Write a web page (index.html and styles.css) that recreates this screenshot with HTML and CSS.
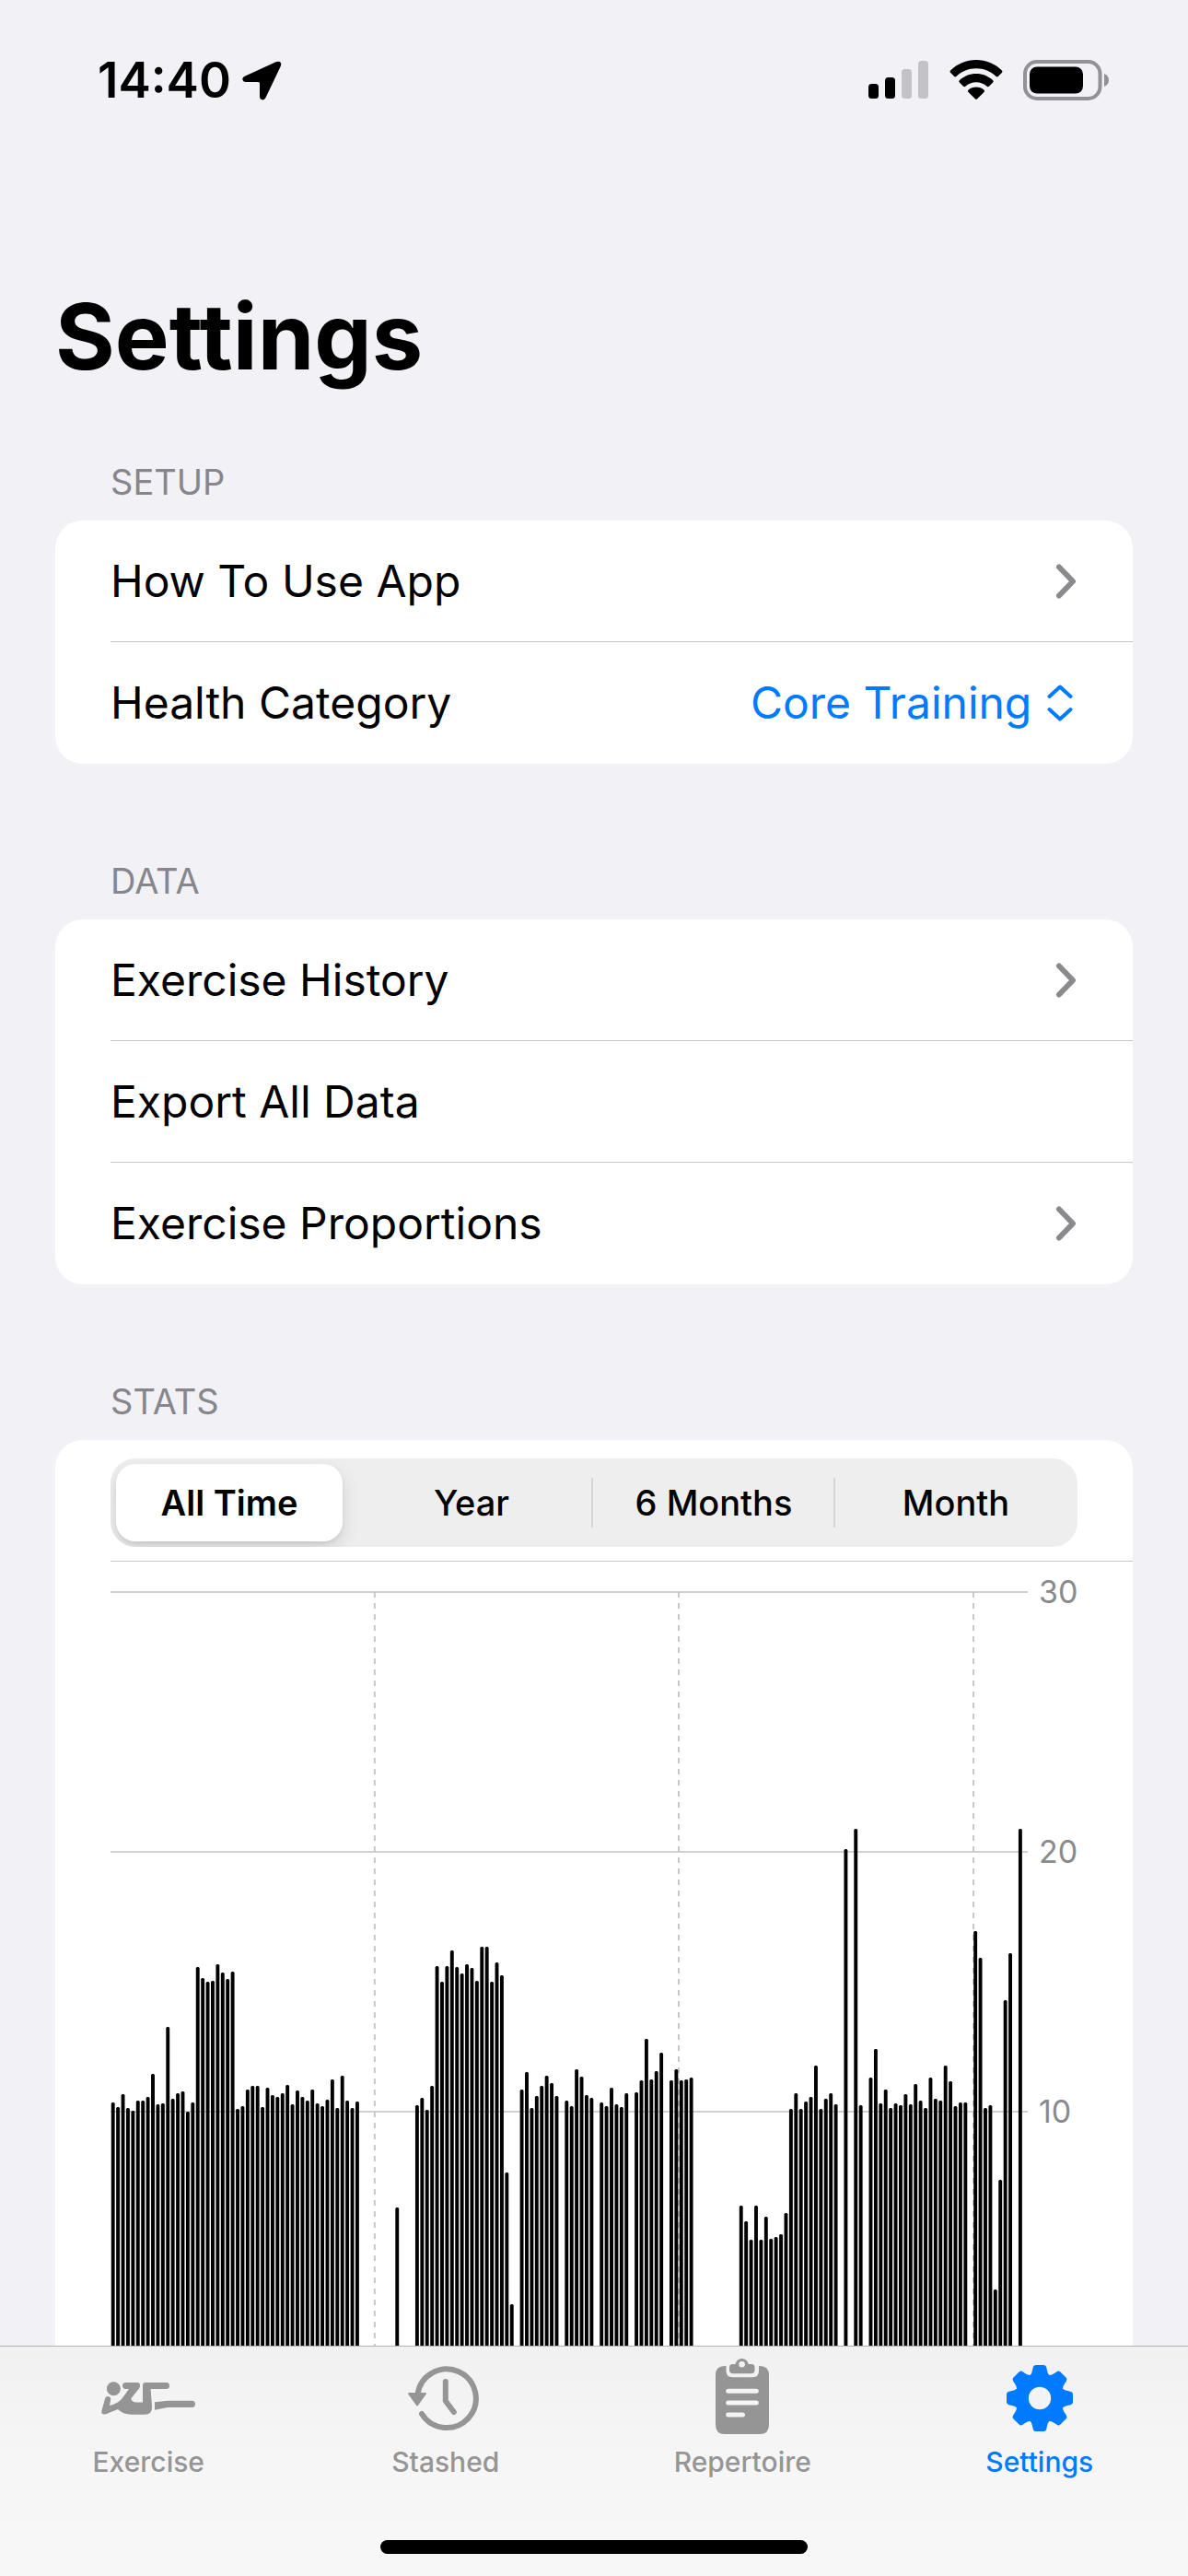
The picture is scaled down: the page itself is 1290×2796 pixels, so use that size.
FILE: index.html
```html
<!DOCTYPE html>
<html lang="en">
<head>
  <meta charset="utf-8">
  <meta name="viewport" content="width=device-width, initial-scale=1">
  <title>Settings</title>
  <link rel="stylesheet" href="styles.css">
</head>
<body>
  <header class="status">
    <div class="status-time">
      <time>14:40</time>
      <svg width="44" height="44" viewBox="0 0 44 44" aria-hidden="true"><path d="M42.300 2.500Q44 4 42.700 7L26.500 41Q25 43.800 22.700 43.300Q20 42.800 20 39.800V25.500Q20 24 18.500 24H5Q2 24 1.400 21.500Q1 19 3.800 17.700L37.500 2.200Q41 1 42.300 2.500Z"/></svg>
    </div>
    <div class="status-icons">
      <svg width="66" height="44" viewBox="0 0 66 44" aria-hidden="true">
        <rect x="0" y="26" width="11" height="16" rx="3.500"/>
        <rect x="18" y="19" width="11" height="23" rx="3.500"/>
        <rect class="dim" x="36" y="10" width="11" height="32" rx="3.500"/>
        <rect class="dim" x="54" y="1" width="11" height="41" rx="3.500"/>
      </svg>
      <svg width="58" height="44" viewBox="0 0 58 44" aria-hidden="true">
        <path d="M29 0C39.500 0 49.500 4.200 57 11.500Q58 12.600 57 13.700L52.800 18Q51.800 18.900 50.700 18C44.800 12.300 37.200 9.200 29 9.200S13.200 12.300 7.300 18Q6.200 18.900 5.200 18L1 13.700Q0 12.600 1 11.500C8.500 4.200 18.500 0 29 0Z"/>
        <path d="M29 15C35.900 15 42.300 17.600 47.200 22.200Q48.300 23.300 47.200 24.400L42.900 28.700Q41.800 29.600 40.700 28.700C37.500 25.800 33.400 24.200 29 24.200S20.500 25.800 17.300 28.700Q16.200 29.600 15.100 28.700L10.800 24.400Q9.700 23.300 10.800 22.200C15.700 17.600 22.100 15 29 15Z"/>
        <path d="M29 29.500C32.300 29.500 35.300 30.700 37.600 32.700Q38.700 33.900 37.500 35L30.200 42.200Q29 43.200 27.800 42.200L20.500 35Q19.300 33.900 20.400 32.700C22.700 30.700 25.700 29.500 29 29.500Z"/>
      </svg>
      <svg width="94" height="44" viewBox="0 0 94 44" aria-hidden="true">
        <rect class="shell" x="2" y="2" width="81.500" height="40" rx="13"/>
        <rect x="7" y="7.500" width="58" height="29" rx="8"/>
        <path class="cap" d="M88 15Q93 17 93 22T88 29Z"/>
      </svg>
    </div>
  </header>

  <main class="content">
    <h1 class="title">Settings</h1>

    <section class="group">
      <h2 class="group-title">SETUP</h2>
      <div class="card">
        <a class="row" href="#how-to"><span class="row-body">How To Use App<svg class="chevron" width="24" height="40" viewBox="0 0 24 40" aria-hidden="true"><path d="M4 4.500L19 20L4 35.500"/></svg></span></a>
        <div class="row">
          <div class="row-body">
            <label for="category">Health Category</label>
            <span class="picker">
              <select id="category">
                <option selected>Core Training</option>
              </select>
              <svg width="28" height="42" viewBox="0 0 28 42" aria-hidden="true"><path d="M2.500 14L14 3.500L25.500 14M2.500 28L14 38.500L25.500 28"/></svg>
            </span>
          </div>
        </div>
      </div>
    </section>

    <section class="group">
      <h2 class="group-title">DATA</h2>
      <div class="card">
        <a class="row" href="#history"><span class="row-body">Exercise History<svg class="chevron" width="24" height="40" viewBox="0 0 24 40" aria-hidden="true"><path d="M4 4.500L19 20L4 35.500"/></svg></span></a>
        <button class="row" type="button"><span class="row-body">Export All Data</span></button>
        <a class="row" href="#proportions"><span class="row-body">Exercise Proportions<svg class="chevron" width="24" height="40" viewBox="0 0 24 40" aria-hidden="true"><path d="M4 4.500L19 20L4 35.500"/></svg></span></a>
      </div>
    </section>

    <section class="group">
      <h2 class="group-title">STATS</h2>
      <div class="card">
        <div class="range-row">
          <div class="segments" role="radiogroup" aria-label="Range">
            <label class="segment"><input type="radio" name="range" checked><span>All Time</span></label>
            <label class="segment"><input type="radio" name="range"><span>Year</span></label>
            <label class="segment"><input type="radio" name="range"><span>6 Months</span></label>
            <label class="segment"><input type="radio" name="range"><span>Month</span></label>
          </div>
        </div>
        <div class="chart">
          <svg class="plot" id="plot" role="img" aria-label="Exercise over time">
            <g class="grid-h">
              <line x1="0" x2="100%" y1="0" y2="0"/>
              <line x1="0" x2="100%" y1="33.333%" y2="33.333%"/>
              <line x1="0" x2="100%" y1="66.667%" y2="66.667%"/>
              <line x1="0" x2="100%" y1="100%" y2="100%"/>
            </g>
            <g class="grid-v">
              <line x1="28.800%" x2="28.800%" y1="0" y2="100%"/>
              <line x1="61.950%" x2="61.950%" y1="0" y2="100%"/>
              <line x1="94.080%" x2="94.080%" y1="0" y2="100%"/>
            </g>
          </svg>
          <div class="axis"><span>30</span><span>20</span><span>10</span></div>
        </div>
      </div>
    </section>
  </main>

  <nav class="tabs">
    <a class="tab" href="#exercise">
      <svg width="102" height="88" viewBox="0 -26 102 88" aria-hidden="true">
        <circle cx="13.400" cy="7.700" r="7.500"/>
        <path d="M4 18.500Q5 15.500 8 16.200Q10.600 17 10.200 19.500L9 26C15 24.500 20 22 23.500 17L30 8H26.500Q23 8 23 4.600T26.500 1H39Q42 1 42 4Q42 6 41 7.500L32.200 18.500Q33.500 22.500 38 22.500H45V4Q45 1 48 1H70.500Q74 1 74 4.600T70.500 8H53.600L55 27Q55.500 35.700 47 35.700H33Q23 35.500 18 30L5 35.200Q0 36.600 .3 32Z"/>
        <path d="M58 22.300L72 20.700H98.500Q102 20.700 102 24.300T98.500 28H72L58 30.700Z"/>
      </svg>
      <span>Exercise</span>
    </a>
    <a class="tab" href="#stashed">
      <svg class="history" width="84" height="88" viewBox="0 -7 84 88" aria-hidden="true">
        <path class="line" d="M11.500 33A31.800 31.800 0 1 1 16 54"/>
        <path class="line" d="M41.800 19V40L50.800 52"/>
        <path class="head" d="M2 32H20L11 44.500Z"/>
      </svg>
      <span>Stashed</span>
    </a>
    <a class="tab" href="#repertoire">
      <svg width="60" height="88" viewBox="0 0 60 88" aria-hidden="true">
        <path d="M12.500 9V14.500Q12.500 21.300 19.500 21.300H41Q48 21.300 48 14.500V9H49Q59 9 59 19V73Q59 83 49 83H11Q1 83 1 73V19Q1 9 11 9Z"/>
        <path fill-rule="evenodd" d="M22.500 7A7.200 7.200 0 0 1 36.700 7H40Q43.500 7 43.500 10.500V13.500Q43.500 17.300 39.500 17.300H20Q16 17.300 16 13.500V10.500Q16 7 19.500 7ZM29.600 4A3.300 3.300 0 1 0 29.600 10.600A3.300 3.300 0 1 0 29.600 4Z"/>
        <path class="rules" d="M14.700 36.300H45.300M14.700 49H45.300M14.700 62H30.500"/>
      </svg>
      <span>Repertoire</span>
    </a>
    <a class="tab tab-current" href="#settings" aria-current="page">
      <svg width="72" height="88" viewBox="-36 -44 72 88" aria-hidden="true">
        <defs><path id="tooth" d="M-11.500 -23L-10 -25.500Q-8.500 -27 -8 -30L-7.300 -33.500Q-6.800 -36 -4.300 -36H4.300Q6.800 -36 7.300 -33.500L8 -30Q8.500 -27 10 -25.500L11.500 -23Z"/></defs>
        <path fill-rule="evenodd" d="M0 -26A26 26 0 1 0 0 26A26 26 0 1 0 0 -26ZM0 -12.200A12.200 12.200 0 1 1 0 12.200A12.200 12.200 0 1 1 0 -12.200Z"/>
        <use href="#tooth"/><use href="#tooth" transform="rotate(45)"/><use href="#tooth" transform="rotate(90)"/><use href="#tooth" transform="rotate(135)"/><use href="#tooth" transform="rotate(180)"/><use href="#tooth" transform="rotate(225)"/><use href="#tooth" transform="rotate(270)"/><use href="#tooth" transform="rotate(315)"/>
      </svg>
      <span>Settings</span>
    </a>
    <div class="home-bar"></div>
  </nav>
  <script src="chart.js"></script>
</body>
</html>
```
FILE: styles.css
```css
* { box-sizing: border-box; }

body {
  margin: 0;
  height: 100vh;
  display: flex;
  flex-direction: column;
  background: #f2f1f6;
  color: #000;
  font-family: Inter, "Liberation Sans", sans-serif;
  font-size: 48px;
}

a, button { color: inherit; font: inherit; text-decoration: none; }
svg { display: block; flex: none; }

/* Status bar */
.status {
  flex: none;
  display: flex;
  justify-content: space-between;
  padding: 65px 85px 0 106px;
  height: 177px;
}
.status-time, .status-icons { display: flex; height: 44px; align-items: center; }
.status-time { gap: 11px; font-size: 53px; font-weight: 600; }
.status-icons { gap: 22px; }
.dim { fill: #c3c2c7; }
.shell { fill: none; stroke: #929195; stroke-width: 4; }
.cap { fill: #929195; }

/* Page */
.content {
  flex: 1;
  min-height: 0;
  overflow-y: auto;
  scrollbar-width: none;
  padding: 128px 60px 0;
}
.title { margin: 0 0 56px; font-size: 99px; line-height: 120px; font-weight: 700; }
.group { margin-bottom: 86px; }
.group-title {
  margin: 0;
  padding: 17px 60px 18px;
  font-size: 38px;
  line-height: 48px;
  font-weight: 400;
  color: #86868b;
}
.group:first-of-type .group-title { padding-top: 18px; }
.card { background: #fff; border-radius: 30px; overflow: hidden; }

.row {
  display: block;
  width: 100%;
  padding: 0 0 0 60px;
  border: 0;
  background: none;
  text-align: left;
}
.row-body {
  display: flex;
  align-items: center;
  justify-content: space-between;
  height: 132px;
  padding-right: 60px;
  border-bottom: 1px solid #c6c6c8;
}
.row:last-child .row-body { border-bottom-color: transparent; }
.chevron { fill: none; stroke: #8a8a8e; stroke-width: 6; stroke-linecap: round; stroke-linejoin: round; }
.picker { display: flex; align-items: center; gap: 16px; padding-right: 5px; color: #007aff; }
.picker select {
  appearance: none;
  margin: 0;
  padding: 0;
  border: 0;
  background: none;
  color: inherit;
  font: inherit;
}
.picker svg { fill: none; stroke: currentColor; stroke-width: 4; stroke-linecap: round; stroke-linejoin: round; }

/* Range selector */
.range-row { margin-left: 60px; padding: 20px 60px 15px 0; border-bottom: 1px solid #c6c6c8; }
.segments {
  display: grid;
  grid-template-columns: repeat(4, 1fr);
  gap: 17px;
  padding: 6px 9px 6px 6px;
  border-radius: 27px;
  background: #eee;
  overflow: hidden;
}
.segment { position: relative; font-size: 38px; font-weight: 500; }
.segment input { position: absolute; opacity: 0; margin: 0; }
.segment span { display: block; line-height: 84px; text-align: center; border-radius: 21px; }
.segment input:checked + span { background: #fff; font-weight: 600; box-shadow: 0 8px 20px #0000001f, 0 3px 4px #0000000f; }
.segment:nth-child(n+3)::before {
  content: "";
  position: absolute;
  left: -10px;
  top: 15px;
  width: 2px;
  height: 54px;
  background: #d6d6d8;
}

/* Chart */
.chart { display: flex; gap: 12px; padding: 33px 60px 60px; }
.plot { flex: 1; min-width: 0; height: 846px; overflow: visible; }
.grid-h { stroke: #d1d1d3; stroke-width: 2; }
.grid-v { stroke: #c8c8ca; stroke-width: 2; stroke-dasharray: 6 6; }
.axis {
  width: 42px;
  height: 604px;
  margin-top: -20px;
  display: flex;
  flex-direction: column;
  justify-content: space-between;
  font-size: 34px;
  line-height: 40px;
  color: #8a8a8e;
}

/* Tab bar */
.tabs {
  flex: none;
  display: grid;
  grid-template-columns: repeat(4, 1fr);
  border-top: 1px solid #b2b2b2;
  background: linear-gradient(#f1f1f1, #f6f6f6 50%, #f7f7f7);
  padding: 12px 0 24px;
}
.tab {
  display: flex;
  flex-direction: column;
  align-items: center;
  gap: 7px;
  font-size: 30px;
  line-height: 36px;
  font-weight: 500;
  color: #959595;
  fill: currentColor;
}
.tab-current { color: #007aff; }
.history .line { fill: none; stroke: currentColor; stroke-width: 6; stroke-linecap: round; stroke-linejoin: round; }
.history .head { stroke: currentColor; stroke-width: 2; stroke-linejoin: round; }
.rules { fill: none; stroke: #f4f4f4; stroke-width: 5; stroke-linecap: round; }
.home-bar {
  grid-column: 1 / -1;
  justify-self: center;
  width: 36%;
  height: 15px;
  margin-top: 67px;
  border-radius: 8px;
  background: #000;
}
```
FILE: chart.js
```js
// One entry per week; 0 means no session. The axis runs to 846 (30 minutes).
const weeks = [
  292, 287, 301, 286, 283, 294, 294, 298, 323, 290, 291, 374, 296, 302, 304, 282, 292,
  439, 427, 423, 424, 442, 433, 426, 434, 285, 288, 306, 310, 310, 287, 308, 300, 298,
  302, 311, 290, 305, 298, 294, 306, 291, 288, 295, 317, 286, 321, 294, 286, 293,
  0, 0, 0, 0, 0, 0, 0, 178, 0, 0, 0,
  289, 297, 284, 310, 440, 423, 440, 457, 439, 432, 442, 438, 424, 461, 461, 423, 444, 430,
  216, 73, 0, 306, 325, 286, 299, 310, 321, 313, 299, 0,
  294, 288, 328, 320, 300, 297, 0, 292, 288, 308, 290, 287, 302, 0,
  303, 316, 361, 317, 326, 346, 0, 316, 328, 316, 317, 319,
  0, 0, 0, 0, 0, 0, 0, 0, 0,
  180, 163, 143, 180, 143, 168, 144, 146, 149, 172,
  285, 302, 285, 293, 298, 332, 285, 296, 302, 290, 0, 567, 0, 589, 289, 0,
  319, 350, 291, 306, 286, 291, 289, 301, 290, 312, 294, 286, 319, 296, 294, 332, 315, 288, 292, 292, 0,
  478, 449, 286, 289, 89, 208, 403, 454, 0, 589, 0
];
const axisMax = 846;
const plot = document.getElementById("plot");

weeks.forEach((value, i) => {
  if (!value) return;
  const bar = document.createElementNS("http://www.w3.org/2000/svg", "rect");
  bar.setAttribute("x", `${(i + 0.14) / weeks.length * 100}%`);
  bar.setAttribute("y", `${(1 - value / axisMax) * 100}%`);
  bar.setAttribute("width", `${0.72 / weeks.length * 100}%`);
  bar.setAttribute("height", `${value / axisMax * 100}%`);
  bar.setAttribute("rx", 1.5);
  plot.append(bar);
});
```
